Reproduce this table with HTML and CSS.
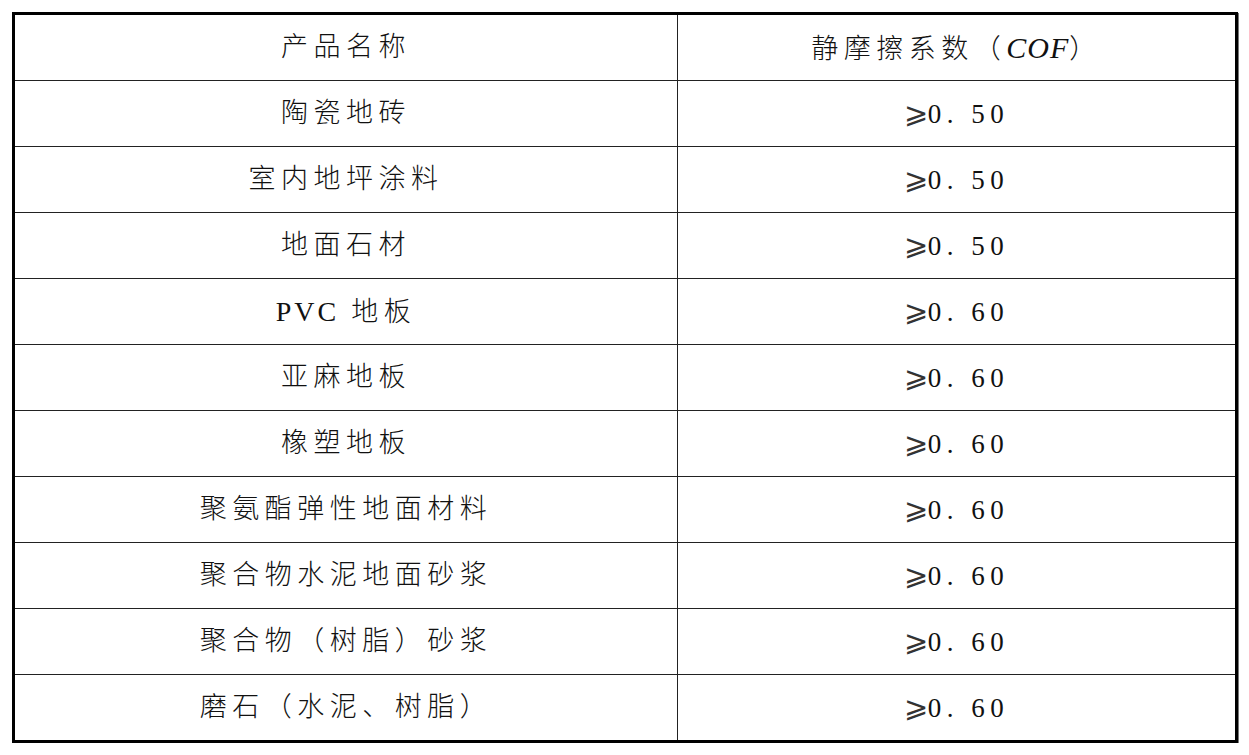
FILE: index.html
```html
<!DOCTYPE html>
<html lang="zh-CN">
<head>
<meta charset="utf-8">
<title>静摩擦系数</title>
<link rel="stylesheet" href="styles.css">
</head>
<body>
<table class="cof-table">
  <thead>
    <tr><th>产品名称</th><th>静摩擦系数（<i class="lat">COF</i>）</th></tr>
  </thead>
  <tbody>
    <tr><td>陶瓷地砖</td><td class="val"><span class="ge">⩾</span>0.&nbsp;50</td></tr>
    <tr><td>室内地坪涂料</td><td class="val"><span class="ge">⩾</span>0.&nbsp;50</td></tr>
    <tr><td>地面石材</td><td class="val"><span class="ge">⩾</span>0.&nbsp;50</td></tr>
    <tr><td><span class="lat pvc">PVC</span> 地板</td><td class="val"><span class="ge">⩾</span>0.&nbsp;60</td></tr>
    <tr><td>亚麻地板</td><td class="val"><span class="ge">⩾</span>0.&nbsp;60</td></tr>
    <tr><td>橡塑地板</td><td class="val"><span class="ge">⩾</span>0.&nbsp;60</td></tr>
    <tr><td>聚氨酯弹性地面材料</td><td class="val"><span class="ge">⩾</span>0.&nbsp;60</td></tr>
    <tr><td>聚合物水泥地面砂浆</td><td class="val"><span class="ge">⩾</span>0.&nbsp;60</td></tr>
    <tr><td>聚合物（树脂）砂浆</td><td class="val"><span class="ge">⩾</span>0.&nbsp;60</td></tr>
    <tr><td>磨石（水泥、树脂）</td><td class="val"><span class="ge">⩾</span>0.&nbsp;60</td></tr>
  </tbody>
</table>
</body>
</html>
```
FILE: styles.css
```css
html, body {
  margin: 0;
  padding: 0;
  background: #ffffff;
}
body {
  padding: 12px 0 0 12px;
  font-family: "Liberation Serif", "Noto Sans CJK SC", serif;
  color: #111111;
}
.cof-table {
  border-collapse: collapse;
  width: 1226px;
  height: 731px;
  border: 3px solid #000000;
  box-shadow: 1px 1px 0 #777777;
}
.cof-table th,
.cof-table td {
  border: 1.5px solid #222222;
  text-align: center;
  vertical-align: middle;
  font-weight: 300;
  font-size: 27px;
  letter-spacing: 5.5px;
  padding: 0;
  line-height: 1;
  height: 65px;
}
.cof-table th:first-child,
.cof-table td:first-child {
  width: 662px;
}
.lat {
  font-family: "Liberation Serif", serif;
  letter-spacing: 1px;
}
i.lat {
  letter-spacing: 1px;
  font-size: 30px;
}
.pvc {
  font-size: 28px;
  letter-spacing: 3px;
}
.val {
  font-family: "Liberation Serif", serif;
  letter-spacing: 0;
  font-size: 30px;
}
.ge {
  font-family: "DejaVu Sans ExtraLight", "DejaVu Sans Light", "DejaVu Serif", "DejaVu Sans", serif;
  font-weight: 200;
  font-size: 29px;
  color: #333333;
  letter-spacing: 0;
}
```
